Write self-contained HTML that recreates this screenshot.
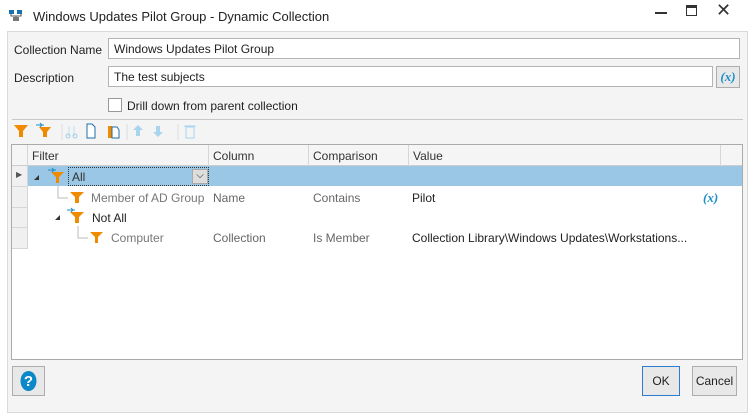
<!DOCTYPE html>
<html><head><style>
*{box-sizing:border-box;margin:0;padding:0}
body{width:754px;height:413px;background:#fff;font-family:"Liberation Sans",sans-serif;font-size:12px;color:#222;position:relative;overflow:hidden}
.a{position:absolute}
.panel{left:7px;top:31px;width:741px;height:382px;background:#f4f4f4;border:1px solid #d9d9d9}
.inp{background:#fff;border:1px solid #b4b4b4;height:21px;padding:3px 5px;line-height:15px}
.t{white-space:nowrap}
.gl{background:#d6d6d6}
.hd{color:#333}
.xv{color:#1b8fc9;font-weight:bold;font-style:italic;font-family:"Liberation Serif",serif;font-size:13px}
.btn{border:1px solid #adadad;background:#e8e8e8;text-align:center}
</style></head><body>
<svg class="a" style="left:8px;top:9px" width="16" height="16" viewBox="0 0 16 16"><rect x="1" y="1" width="5" height="4" fill="#1a6fb0"/><rect x="9" y="1" width="5" height="4" fill="#1a6fb0"/><rect x="5" y="8" width="6" height="4" fill="#777"/><path d="M3 5v2h10V5M8 7v1" stroke="#555" fill="none"/></svg>
<div class="a t" style="left:33px;top:9px;font-size:13px;color:#222">Windows Updates Pilot Group - Dynamic Collection</div>
<div class="a" style="left:655px;top:12px;width:12px;height:2px;background:#333"></div>
<div class="a" style="left:686px;top:5px;width:11px;height:11px;border:1.5px solid #333;border-top-width:3px"></div>
<div class="a t" style="left:716px;top:0px;font-size:18px;color:#333">✕</div>
<div class="a panel"></div>
<div class="a t" style="left:14px;top:43px">Collection Name</div>
<div class="a inp t" style="left:108px;top:38px;width:632px">Windows Updates Pilot Group</div>
<div class="a t" style="left:14px;top:71px">Description</div>
<div class="a inp t" style="left:108px;top:66px;width:605px">The test subjects</div>
<div class="a btn xv" style="left:716px;top:66px;width:24px;height:22px;line-height:20px">(x)</div>
<div class="a" style="left:108px;top:98px;width:14px;height:14px;background:#fff;border:1px solid #999"></div>
<div class="a t" style="left:127px;top:99px">Drill down from parent collection</div>
<div class="a" style="left:12px;top:119px;width:731px;height:1px;background:#c8c8c8"></div>
<svg class="a" style="left:12px;top:122px" width="200" height="18">
<g fill="#f08a00"><path d="M2 3h14l-5 6v6h-4v-6z"/><path d="M27 5h12l-4 5v5h-4v-5z"/></g>
<path d="M24 3h8M28 1l2 2-2 2" stroke="#1b8fc9" fill="none"/>
<path d="M57 4v10M62 4v10" stroke="#bfdff0"/><circle cx="56" cy="14" r="2" fill="none" stroke="#9fcde8"/><circle cx="63" cy="14" r="2" fill="none" stroke="#9fcde8"/>
<path d="M75 2h5l3 3v11h-8z" fill="#fff" stroke="#1b6fa8"/><path d="M96 4h4v12h-4z" fill="#f08a00"/><path d="M100 5h5l2 3v8h-7z" fill="#fff" stroke="#1b6fa8"/>
<path d="M126 3l5 5h-3v6h-4v-6h-3z" fill="#a8d4ee"/><path d="M146 15l5-5h-3V4h-4v6h-3z" fill="#a8d4ee"/>
<path d="M174 5h8v11h-8zM172 4h12" stroke="#a8d4ee" fill="none"/>
<path d="M50 2v16M115 2v16M166 2v16" stroke="#ddd"/></svg>
<div class="a" style="left:11px;top:144px;width:732px;height:216px;background:#fff;border:1px solid #aaa"></div>
<div class="a" style="left:12px;top:145px;width:730px;height:21px;background:#f5f5f5;border-bottom:1px solid #ccc"></div>
<div class="a gl" style="left:27px;top:145px;width:1px;height:21px"></div>
<div class="a gl" style="left:208px;top:145px;width:1px;height:21px"></div>
<div class="a gl" style="left:308px;top:145px;width:1px;height:21px"></div>
<div class="a gl" style="left:408px;top:145px;width:1px;height:21px"></div>
<div class="a gl" style="left:720px;top:145px;width:1px;height:21px"></div>
<div class="a t hd" style="left:32px;top:149px">Filter</div>
<div class="a t hd" style="left:213px;top:149px">Column</div>
<div class="a t hd" style="left:313px;top:149px">Comparison</div>
<div class="a t hd" style="left:413px;top:149px">Value</div>
<div class="a" style="left:12px;top:166px;width:16px;height:82px;background:#f0f0f0"></div>
<div class="a gl" style="left:12px;top:186px;width:16px;height:1px"></div>
<div class="a gl" style="left:12px;top:207px;width:16px;height:1px"></div>
<div class="a gl" style="left:12px;top:227px;width:16px;height:1px"></div>
<div class="a gl" style="left:12px;top:248px;width:16px;height:1px"></div>
<div class="a gl" style="left:27px;top:166px;width:1px;height:82px"></div>
<div class="a" style="left:28px;top:166px;width:714px;height:20px;background:#99c7e5"></div>
<div class="a" style="left:68px;top:167px;width:141px;height:19px;border:1px dotted #333"></div>
<div class="a" style="left:192px;top:169px;width:16px;height:15px;background:#ddd;border:1px solid #aaa;font-size:10px;text-align:center;line-height:12px">⌵</div>
<div class="a t" style="left:16px;top:170px;font-size:8px;color:#555">▶</div>
<svg class="a" style="left:30px;top:166px" width="120" height="82">
<path d="M4 14l5-5v5z M25 54l5-5v5z" fill="#333"/>
<path d="M28 20v12h10M48 60v12h10" stroke="#bbb" fill="none"/>
<g fill="#f08a00"><path d="M21 6h13l-5 5v6h-3v-6z"/><path d="M40 26h14l-5 5v6h-4v-6z"/><path d="M40 46h14l-5 5v6h-4v-6z"/><path d="M60 66h13l-5 5v6h-3v-6z"/></g>
<path d="M18 4h8M22 2l2 2-2 2M37 44h8M41 42l2 2-2 2" stroke="#1b8fc9" fill="none"/></svg>
<div class="a t" style="left:72px;top:170px;color:#333">All</div>
<div class="a t" style="left:91px;top:191px;color:#777">Member of AD Group</div>
<div class="a t" style="left:213px;top:191px;color:#666">Name</div>
<div class="a t" style="left:313px;top:191px;color:#666">Contains</div>
<div class="a t" style="left:412px;top:191px">Pilot</div>
<div class="a xv" style="left:703px;top:190px">(x)</div>
<div class="a t" style="left:92px;top:211px">Not All</div>
<div class="a t" style="left:111px;top:231px;color:#777">Computer</div>
<div class="a t" style="left:213px;top:231px;color:#666">Collection</div>
<div class="a t" style="left:313px;top:231px;color:#666">Is Member</div>
<div class="a t" style="left:412px;top:231px">Collection Library\Windows Updates\Workstations...</div>
<div class="a btn" style="left:12px;top:366px;width:33px;height:30px"><svg width="31" height="28"><ellipse cx="15.5" cy="14" rx="8" ry="10" fill="#0b88c8"/><text x="15.5" y="19" text-anchor="middle" fill="#fff" font-weight="bold" font-size="15" font-family="Liberation Sans">?</text></svg></div>
<div class="a btn" style="left:642px;top:366px;width:38px;height:30px;border-color:#2a7dd0;line-height:28px">OK</div>
<div class="a btn" style="left:692px;top:366px;width:45px;height:30px;line-height:28px">Cancel</div>
</body></html>
